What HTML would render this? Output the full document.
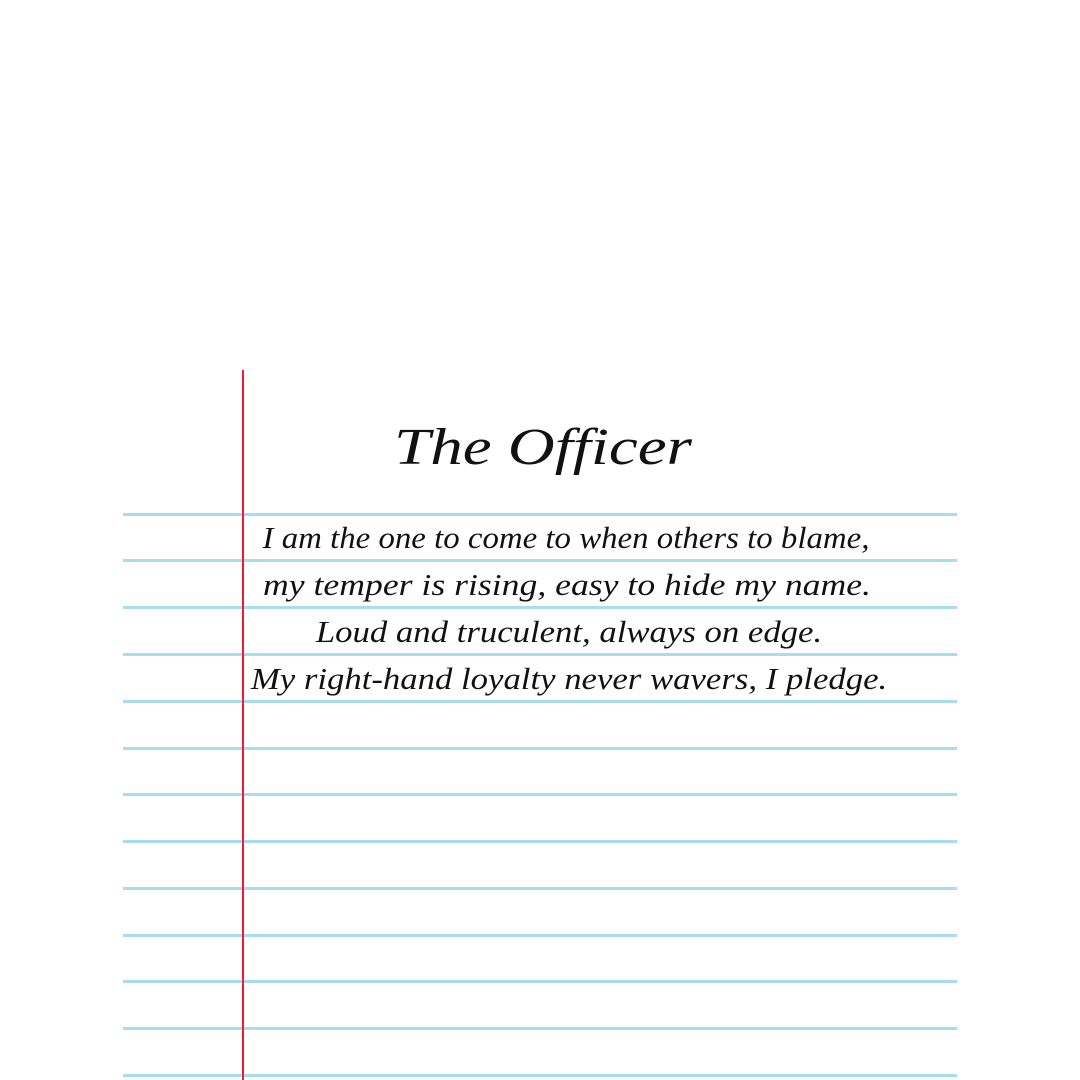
<!DOCTYPE html>
<html><head><meta charset="utf-8"><style>
html,body{margin:0;padding:0;background:#fff;}
body{width:1080px;height:1080px;position:relative;overflow:hidden;font-family:"Liberation Serif",serif;font-style:italic;color:#111;}
.l{position:absolute;left:123px;width:834px;height:3px;background:#a9dcef;}
.r{position:absolute;left:242px;top:370px;width:2px;height:710px;background:#f01a35;}
.t{position:absolute;width:1000px;text-align:center;white-space:nowrap;}
</style></head><body>
<div class="l" style="top:513px"></div>
<div class="l" style="top:559px"></div>
<div class="l" style="top:606px"></div>
<div class="l" style="top:653px"></div>
<div class="l" style="top:700px"></div>
<div class="l" style="top:747px"></div>
<div class="l" style="top:793px"></div>
<div class="l" style="top:840px"></div>
<div class="l" style="top:887px"></div>
<div class="l" style="top:934px"></div>
<div class="l" style="top:980px"></div>
<div class="l" style="top:1027px"></div>
<div class="l" style="top:1074px"></div>
<div class="r"></div>
<div class="t" style="left:43px;top:418px;font-size:52px;transform:scaleX(1.25);">The Officer</div>
<div class="t" style="left:66px;top:520px;font-size:31px;transform:scaleX(1.06);">I am the one to come to when others to blame,</div>
<div class="t" style="left:67px;top:567px;font-size:31px;transform:scaleX(1.15);">my temper is rising, easy to hide my name.</div>
<div class="t" style="left:69px;top:614px;font-size:31px;transform:scaleX(1.12);">Loud and truculent, always on edge.</div>
<div class="t" style="left:69px;top:661px;font-size:31px;transform:scaleX(1.12);">My right-hand loyalty never wavers, I pledge.</div>
</body></html>
